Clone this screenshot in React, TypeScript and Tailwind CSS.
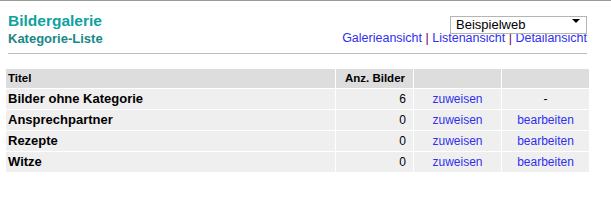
import React from "react";

const rows = [
  { title: "Bilder ohne Kategorie", count: 6, edit: false },
  { title: "Ansprechpartner", count: 0, edit: true },
  { title: "Rezepte", count: 0, edit: true },
  { title: "Witze", count: 0, edit: true },
];

export default function App() {
  return (
    <div className="w-[611px] h-[210px] bg-white border-t border-[#9a9a9a] font-['Liberation_Sans',Arial,sans-serif] text-black">
      {/* header */}
      <div className="ml-2 mr-6 h-[53px] flex justify-between border-b border-[#bbbbbb]">
        <div className="pt-[11px]">
          <h1 className="text-[15.5px] leading-[18px] font-bold text-[#0fa0a0]">Bildergalerie</h1>
          <h2 className="mt-px text-[13px] leading-[16px] font-bold text-[#188787]">Kategorie-Liste</h2>
        </div>
        <div className="pt-[11px] flex flex-col items-end">
          <div className="relative w-[137px] h-[18px]">
            <select className="appearance-none w-full h-full border border-[#b4b4b4] bg-white pl-[5px] text-[13px] leading-[16px] text-black outline-none">
              <option>Beispielweb</option>
            </select>
            <span className="pointer-events-none absolute right-[7px] top-[7px] w-0 h-0 border-l-[4px] border-r-[4px] border-t-[4px] border-l-transparent border-r-transparent border-t-black" />
          </div>
          <div className="mt-px text-[12.5px] leading-[15px] whitespace-nowrap">
            <a className="text-[#2f2fee] cursor-pointer">Galerieansicht</a>
            <span className="text-[#660066]"> | </span>
            <a className="text-[#2f2fee] cursor-pointer">Listenansicht</a>
            <span className="text-[#660066]"> | </span>
            <a className="text-[#2f2fee] cursor-pointer">Detailansicht</a>
          </div>
        </div>
      </div>

      {/* table */}
      <div className="mt-[15px] ml-[6px] w-[583px] grid grid-cols-[329px_77px_87px_87px] gap-px">
        <div className="h-[19px] bg-[#dddddd] pl-[2px] text-[11.5px] leading-[19px] font-bold">Titel</div>
        <div className="h-[19px] bg-[#dddddd] pr-2 text-right text-[11.5px] leading-[19px] font-bold">Anz. Bilder</div>
        <div className="h-[19px] bg-[#dddddd]" />
        <div className="h-[19px] bg-[#dddddd]" />

        {rows.map((r) => (
          <React.Fragment key={r.title}>
            <div className="h-[20px] bg-[#efefef] pl-[2px] text-[13px] leading-[20px] font-bold">{r.title}</div>
            <div className="h-[20px] bg-[#efefef] pr-[7px] text-right text-[12px] leading-[20px]">{r.count}</div>
            <div className="h-[20px] bg-[#efefef] text-center text-[12px] leading-[20px]">
              <a className="text-[#2f2fee] cursor-pointer">zuweisen</a>
            </div>
            <div className="h-[20px] bg-[#efefef] text-center text-[12px] leading-[20px]">
              {r.edit ? <a className="text-[#2f2fee] cursor-pointer">bearbeiten</a> : "-"}
            </div>
          </React.Fragment>
        ))}
      </div>
    </div>
  );
}
